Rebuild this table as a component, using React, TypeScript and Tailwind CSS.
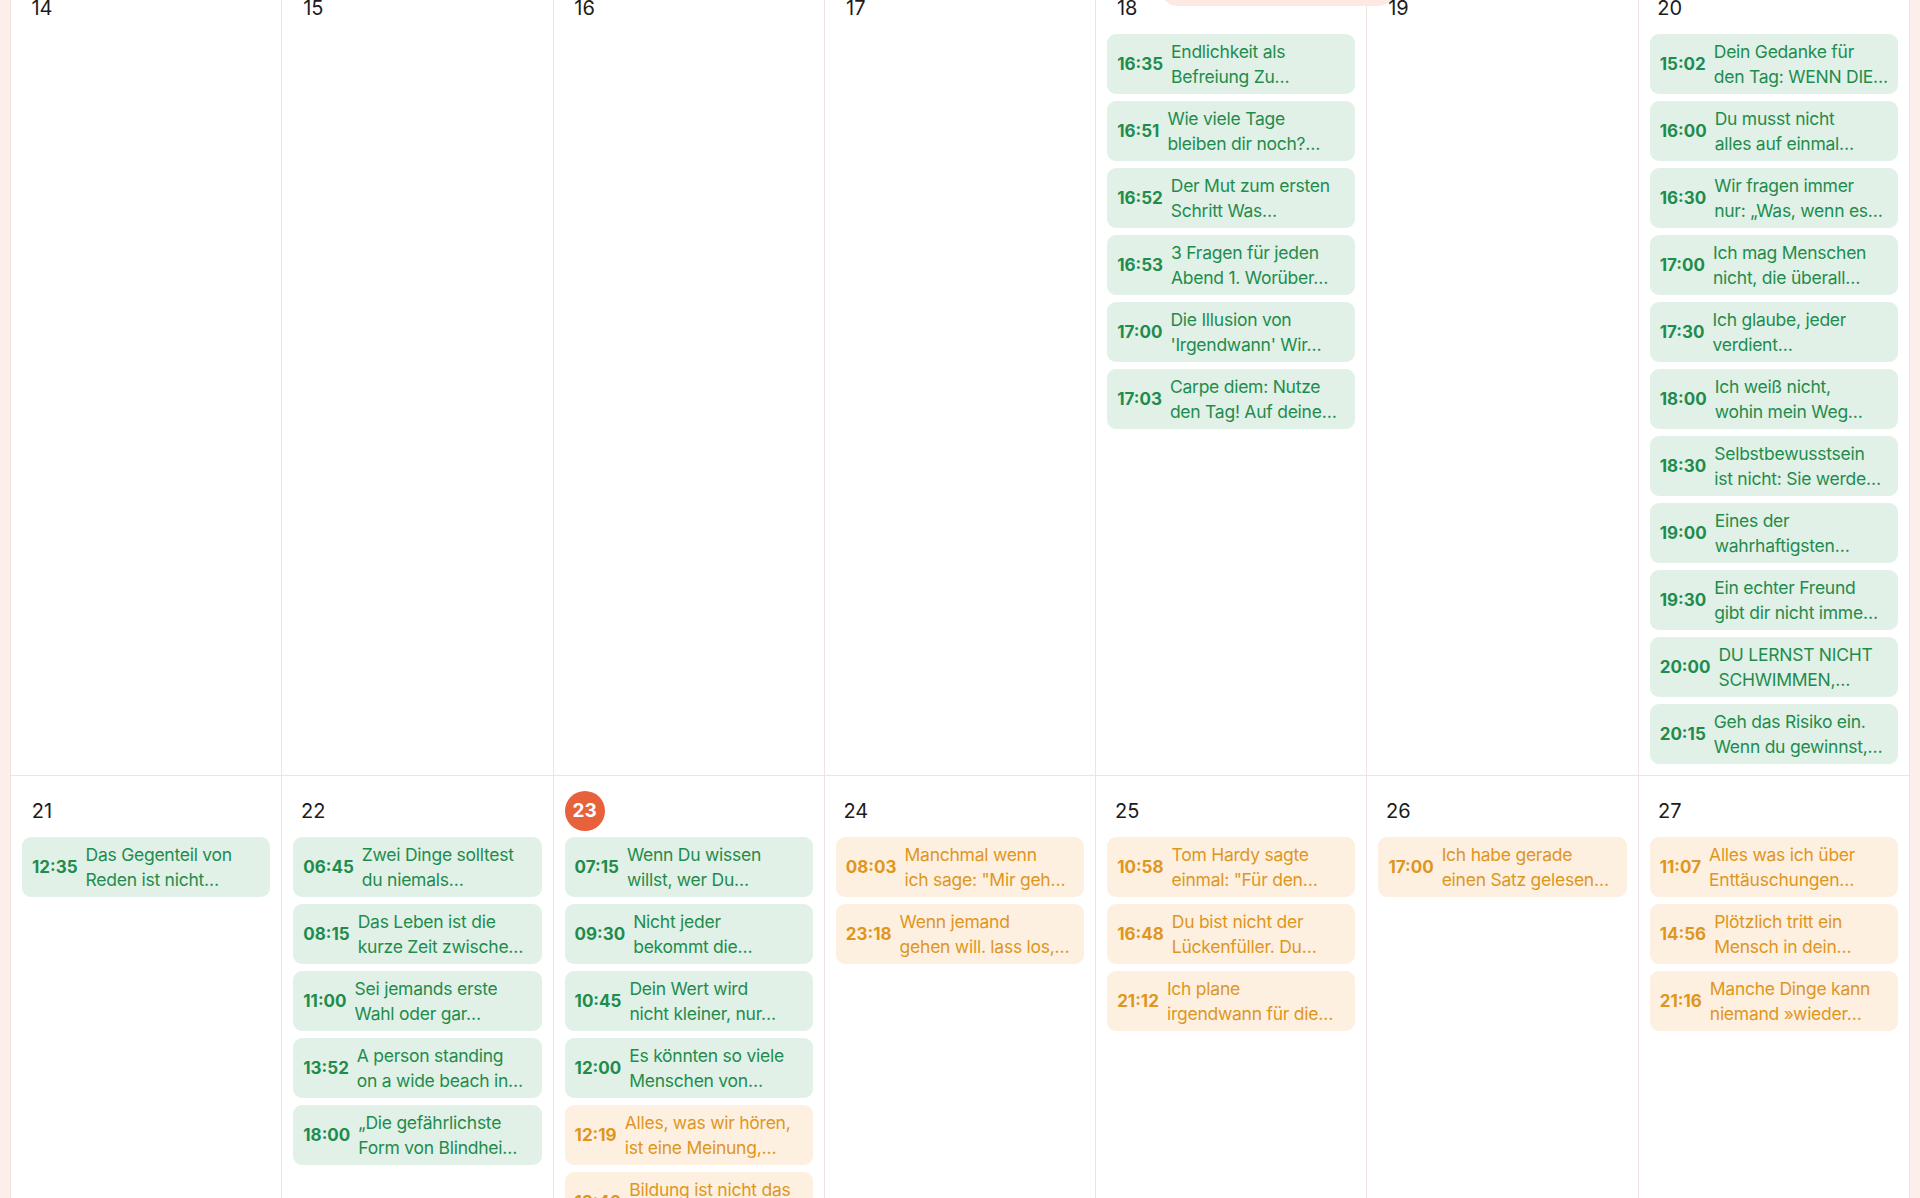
import React from "react";

type Post = { time: string; lines: [string, string]; status: "done" | "planned" };

type Day = { date: number; today?: boolean; posts: Post[] };

const g = (time: string, a: string, b: string): Post => ({ time, lines: [a, b], status: "done" });
const o = (time: string, a: string, b: string): Post => ({ time, lines: [a, b], status: "planned" });

const weeks: Day[][] = [
  [
    { date: 14, posts: [] },
    { date: 15, posts: [] },
    { date: 16, posts: [] },
    { date: 17, posts: [] },
    {
      date: 18,
      posts: [
        g("16:35", "Endlichkeit als", "Befreiung Zu…"),
        g("16:51", "Wie viele Tage", "bleiben dir noch?…"),
        g("16:52", "Der Mut zum ersten", "Schritt Was…"),
        g("16:53", "3 Fragen für jeden", "Abend 1. Worüber…"),
        g("17:00", "Die Illusion von", "'Irgendwann' Wir…"),
        g("17:03", "Carpe diem: Nutze", "den Tag! Auf deine…"),
      ],
    },
    { date: 19, posts: [] },
    {
      date: 20,
      posts: [
        g("15:02", "Dein Gedanke für", "den Tag: WENN DIE…"),
        g("16:00", "Du musst nicht", "alles auf einmal…"),
        g("16:30", "Wir fragen immer", "nur: „Was, wenn es…"),
        g("17:00", "Ich mag Menschen", "nicht, die überall…"),
        g("17:30", "Ich glaube, jeder", "verdient…"),
        g("18:00", "Ich weiß nicht,", "wohin mein Weg…"),
        g("18:30", "Selbstbewusstsein", "ist nicht: Sie werde…"),
        g("19:00", "Eines der", "wahrhaftigsten…"),
        g("19:30", "Ein echter Freund", "gibt dir nicht imme…"),
        g("20:00", "DU LERNST NICHT", "SCHWIMMEN,…"),
        g("20:15", "Geh das Risiko ein.", "Wenn du gewinnst,…"),
      ],
    },
  ],
  [
    { date: 21, posts: [g("12:35", "Das Gegenteil von", "Reden ist nicht…")] },
    {
      date: 22,
      posts: [
        g("06:45", "Zwei Dinge solltest", "du niemals…"),
        g("08:15", "Das Leben ist die", "kurze Zeit zwische…"),
        g("11:00", "Sei jemands erste", "Wahl oder gar…"),
        g("13:52", "A person standing", "on a wide beach in…"),
        g("18:00", "„Die gefährlichste", "Form von Blindhei…"),
      ],
    },
    {
      date: 23,
      today: true,
      posts: [
        g("07:15", "Wenn Du wissen", "willst, wer Du…"),
        g("09:30", "Nicht jeder", "bekommt die…"),
        g("10:45", "Dein Wert wird", "nicht kleiner, nur…"),
        g("12:00", "Es könnten so viele", "Menschen von…"),
        o("12:19", "Alles, was wir hören,", "ist eine Meinung,…"),
        o("12:40", "Bildung ist nicht das", "Lernen von Fakten…"),
      ],
    },
    {
      date: 24,
      posts: [
        o("08:03", "Manchmal wenn", "ich sage: \"Mir geh…"),
        o("23:18", "Wenn jemand", "gehen will. lass los,…"),
      ],
    },
    {
      date: 25,
      posts: [
        o("10:58", "Tom Hardy sagte", "einmal: \"Für den…"),
        o("16:48", "Du bist nicht der", "Lückenfüller. Du…"),
        o("21:12", "Ich plane", "irgendwann für die…"),
      ],
    },
    { date: 26, posts: [o("17:00", "Ich habe gerade", "einen Satz gelesen…")] },
    {
      date: 27,
      posts: [
        o("11:07", "Alles was ich über", "Enttäuschungen…"),
        o("14:56", "Plötzlich tritt ein", "Mensch in dein…"),
        o("21:16", "Manche Dinge kann", "niemand »wieder…"),
      ],
    },
  ],
];

function PostCard({ post }: { post: Post }) {
  const done = post.status === "done";
  return (
    <div
      className={
        done
          ? "flex items-center gap-2 rounded-[9px] bg-[#e1f1e7] px-[10px] py-[5px] text-[#1f8c4e]"
          : "flex items-center gap-2 rounded-[9px] bg-[#fdf0e0] px-[10px] py-[5px] text-[#df961f]"
      }
    >
      <span className="shrink-0 text-[17px] font-bold leading-[25px]">{post.time}</span>
      <div className="min-w-0 text-[17.5px] leading-[25px] tracking-[-0.25px]">
        <div className="truncate">{post.lines[0]}</div>
        <div className="truncate">{post.lines[1]}</div>
      </div>
    </div>
  );
}

function DayCell({ day }: { day: Day }) {
  return (
    <div className="min-w-0 border-r border-b border-[#efe4e1] px-[11px] pt-[15px] pb-[11px]">
      <div className="mb-[6px] flex">
        {day.today ? (
          <span className="flex h-10 w-10 items-center justify-center rounded-full bg-[#e8613d] text-[19px] font-bold text-white">
            {day.date}
          </span>
        ) : (
          <span className="flex h-10 w-10 items-center justify-center text-[20px] text-[#1c1c1c]">{day.date}</span>
        )}
      </div>
      <div className="flex flex-col gap-[7px]">
        {day.posts.map((p, i) => (
          <PostCard key={i} post={p} />
        ))}
      </div>
    </div>
  );
}

export default function App() {
  return (
    <div className="relative h-screen overflow-hidden bg-[#fcefeb] px-[10px] font-[Inter,sans-serif]">
      <div className="-mt-[27px] grid grid-cols-7 border-l border-[#efe4e1] bg-white">
        {weeks.flat().map((d) => (
          <DayCell key={d.date} day={d} />
        ))}
      </div>

      {/* floating toolbar pill, scrolled mostly out of view */}
      <div className="absolute top-[-30px] left-[1160px] h-9 w-[236px] rounded-full bg-[#fde8e2]" />
    </div>
  );
}
